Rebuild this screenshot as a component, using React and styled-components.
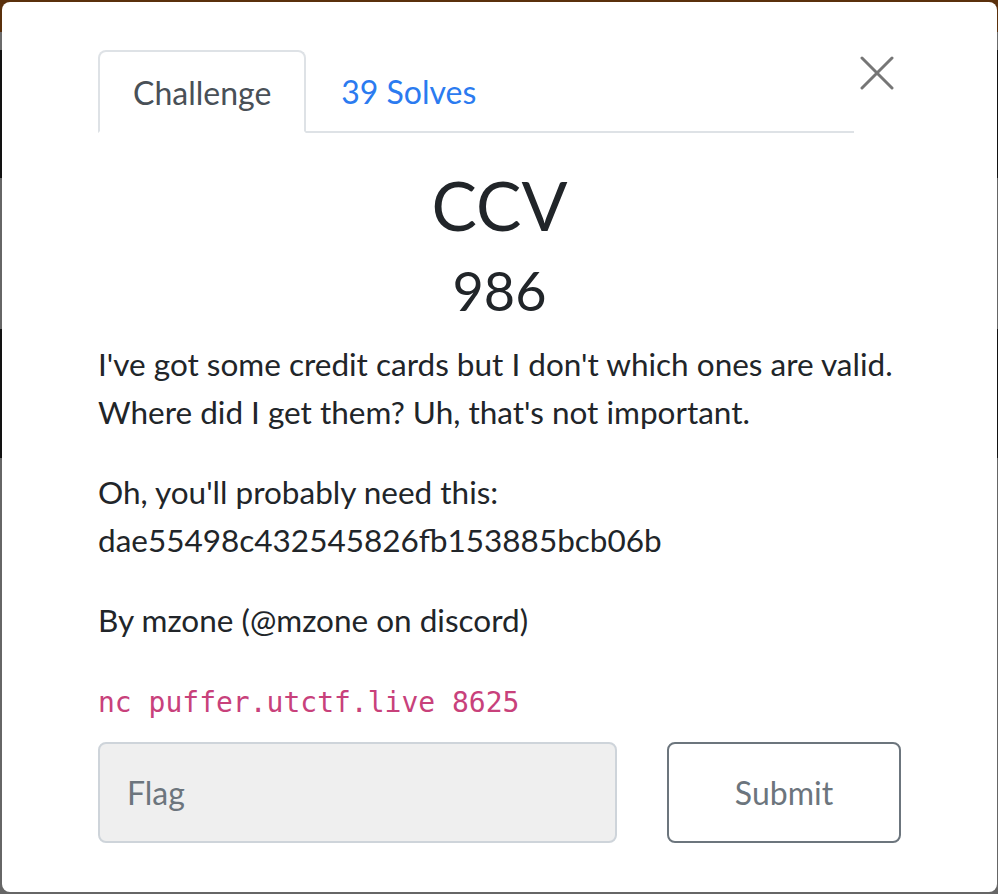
import React from 'react';
import styled, { createGlobalStyle } from 'styled-components';

const GlobalStyle = createGlobalStyle`
  html, body {
    margin: 0;
    padding: 0;
    height: 100%;
  }
  body {
    background: linear-gradient(
      to bottom,
      #5a300c 0px,
      #5a300c 32px,
      #6b6b6b 32px,
      #6b6b6b 50px,
      #121212 50px,
      #121212 178px,
      #666 178px,
      #666 329px,
      #121212 329px,
      #121212 458px,
      #666 458px
    );
    font-family: Lato, 'Open Sans', sans-serif;
    color: #212529;
  }
`;

const Modal = styled.div`
  margin: 2px 1px 2px 2px;
  height: 890px;
  box-sizing: border-box;
  background: #fff;
  border-radius: 8px;
  padding: 48px 96px 49px 96px;
  display: flex;
  flex-direction: column;
`;

const Header = styled.div`
  display: grid;
  grid-template-columns: 1fr 47px;
  align-items: start;
`;

const Tabs = styled.div`
  display: flex;
  border-bottom: 2px solid #dee2e6;
  height: 83px;
  box-sizing: border-box;
`;

const Tab = styled.div`
  font-size: 32px;
  padding: 2px 33px 0;
  box-sizing: border-box;
  display: flex;
  align-items: center;
  border: 2px solid ${props => (props.active ? '#dee2e6' : 'transparent')};
  border-bottom-color: ${props => (props.active ? '#fff' : 'transparent')};
  border-radius: 8px 8px 0 0;
  color: ${props => (props.active ? '#495057' : '#2b7bf0')};
  background: ${props => (props.active ? '#fff' : 'transparent')};
  margin-bottom: ${props => (props.active ? '-2px' : '0')};
  height: ${props => (props.active ? '83px' : '81px')};
`;

const Close = styled.button`
  border: 0;
  background: none;
  padding: 0;
  margin: 6px 0 0 6px;
  width: 34px;
  height: 34px;
  cursor: pointer;
  color: #767676;
`;

const Title = styled.h2`
  font-size: 68px;
  font-weight: 400;
  line-height: 1.2;
  text-align: center;
  margin: 31px 0 13px;
`;

const Value = styled.h3`
  font-size: 54px;
  font-weight: 400;
  line-height: 1.2;
  text-align: center;
  margin: 0 0 17px;
`;

const Text = styled.p`
  font-size: 31.5px;
  line-height: 48px;
  margin: 0 0 ${props => (props.last ? '15px' : '32px')};
`;

const Code = styled.code`
  font-family: 'DejaVu Sans Mono', 'Liberation Mono', monospace;
  font-size: 28px;
  color: #c8417b;
`;

const Form = styled.div`
  display: grid;
  grid-template-columns: 519px 234px;
  justify-content: space-between;
`;

const Input = styled.input`
  height: 101px;
  box-sizing: border-box;
  border: 2px solid #ced4da;
  border-radius: 8px;
  background: #efefef;
  font-family: Lato, sans-serif;
  font-size: 32px;
  padding: 0 27px;
  color: #495057;

  &::placeholder {
    color: #6c757d;
  }
`;

const Submit = styled.button`
  height: 101px;
  box-sizing: border-box;
  border: 2px solid #6c757d;
  border-radius: 8px;
  background: #fff;
  font-family: Lato, sans-serif;
  font-size: 32px;
  color: #6c757d;
  cursor: pointer;
`;

export default function App() {
  return (
    <>
      <GlobalStyle />
      <Modal>
        <Header>
          <Tabs>
            <Tab active>Challenge</Tab>
            <Tab>39 Solves</Tab>
          </Tabs>
          <Close aria-label="Close">
            <svg width="34" height="34" viewBox="0 0 34 34">
              <path
                d="M2 2 L32 32 M32 2 L2 32"
                stroke="currentColor"
                strokeWidth="3"
                strokeLinecap="round"
              />
            </svg>
          </Close>
        </Header>
        <Title>CCV</Title>
        <Value>986</Value>
        <Text>
          I've got some credit cards but I don't which ones are valid. Where did
          I get them? Uh, that's not important.
        </Text>
        <Text>
          Oh, you'll probably need this: dae55498c432545826fb153885bcb06b
        </Text>
        <Text>By mzone (@mzone on discord)</Text>
        <Text last>
          <Code>nc puffer.utctf.live 8625</Code>
        </Text>
        <Form>
          <Input placeholder="Flag" />
          <Submit>Submit</Submit>
        </Form>
      </Modal>
    </>
  );
}
